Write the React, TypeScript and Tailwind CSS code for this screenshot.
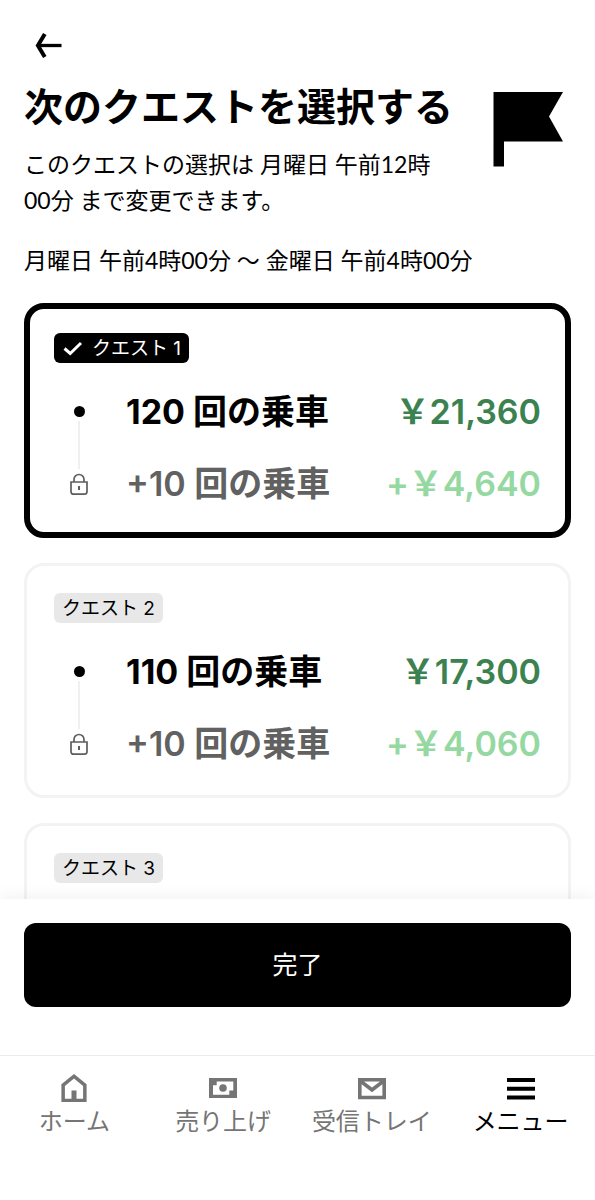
type Level = {
  rides: string;
  reward: string;
};

type Quest = {
  name: string;
  levels?: [Level, Level];
};

const quests: Quest[] = [
  {
    name: "クエスト 1",
    levels: [
      { rides: "120 回の乗車", reward: "￥21,360" },
      { rides: "+10 回の乗車", reward: "+￥4,640" },
    ],
  },
  {
    name: "クエスト 2",
    levels: [
      { rides: "110 回の乗車", reward: "￥17,300" },
      { rides: "+10 回の乗車", reward: "+￥4,060" },
    ],
  },
  { name: "クエスト 3" },
];

function BackIcon() {
  return (
    <svg width="32" height="32" viewBox="0 0 32 32" fill="none" stroke="currentColor">
      <path d="M5.5 15.5H29.5" strokeWidth="3.3" />
      <path d="M12.8 4L5.9 15.5L12.8 27" strokeWidth="4" />
    </svg>
  );
}

function FlagIcon() {
  return (
    <svg width="70" height="75" viewBox="0 0 70 75" fill="currentColor" className="shrink-0">
      <path d="M0.5 0H70L56 24.5L70 49.5H11V74.5H0.5Z" />
    </svg>
  );
}

function CheckIcon() {
  return (
    <svg width="22" height="22" viewBox="0 0 22 22" fill="none" stroke="currentColor">
      <path d="M2.5 10.5L8.2 15.5L19 5" strokeWidth="3" />
    </svg>
  );
}

function LockIcon() {
  return (
    <svg width="20" height="23" viewBox="0 0 20 23" fill="none" stroke="#5e5e5e" strokeWidth="1.7">
      <path d="M2 9H18V18.5Q18 21.2 15.3 21.2H4.7Q2 21.2 2 18.5Z" />
      <path d="M5 9V6.5A5 5 0 0 1 15 6.5V9" />
      <path d="M10 13V17" strokeWidth="2" />
    </svg>
  );
}

function HomeIcon() {
  return (
    <svg width="30" height="30" viewBox="0 0 30 30" fill="currentColor">
      <path
        fillRule="evenodd"
        d="M15 1L27.6 11.3V29H2.4V11.3ZM15 5.6L5.9 13V25.7H24.1V13Z"
      />
      <path d="M12.5 17.5H17.5V26H12.5Z" />
    </svg>
  );
}

function MoneyIcon() {
  return (
    <svg width="30" height="30" viewBox="0 0 30 30" fill="currentColor">
      <path
        fillRule="evenodd"
        d="M1 5H29V25H1ZM8.7 8.5V12.3H5V21.7H21.3V17.5H25.3V8.5Z"
      />
      <circle cx="15" cy="15" r="3.8" />
    </svg>
  );
}

function MailIcon() {
  return (
    <svg width="30" height="30" viewBox="0 0 30 30" fill="currentColor">
      <path
        fillRule="evenodd"
        d="M1 5H29V26.3H1ZM7 8.6L15 14.6L23 8.6ZM4.6 11.3V22.8H25.4V11.3L15 19.2Z"
      />
    </svg>
  );
}

function MenuIcon() {
  return (
    <svg width="30" height="30" viewBox="0 0 30 30" fill="currentColor">
      <path d="M1 5H29V9H1ZM1 13.7H29V17.7H1ZM1 22.5H29V26.5H1Z" />
    </svg>
  );
}

function QuestLevels({ levels }: { levels: [Level, Level] }) {
  const [base, extra] = levels;

  return (
    <div className="mt-6 flex gap-[22px]">
      <div className="flex w-[50px] flex-col items-center gap-1 pt-[19px] pb-3">
        <span className="size-[11px] rounded-full bg-black" />
        <span className="w-[2px] flex-1 bg-[#f0f0f0]" />
        <LockIcon />
      </div>
      <div className="flex flex-1 flex-col gap-6 pt-px text-[34px] leading-[48px]">
        <div className="flex justify-between">
          <span className="font-bold">{base.rides}</span>
          <span className="font-semibold text-[#3b8250]">{base.reward}</span>
        </div>
        <div className="flex justify-between">
          <span className="font-semibold text-[#616161]">{extra.rides}</span>
          <span className="font-semibold text-[#95d8a2]">{extra.reward}</span>
        </div>
      </div>
    </div>
  );
}

function QuestCard({ quest, selected }: { quest: Quest; selected: boolean }) {
  return (
    <li
      className={
        selected
          ? "min-h-[235px] rounded-[20px] border-6 border-black p-6"
          : "min-h-[235px] rounded-[20px] border-3 border-[#f3f3f3] p-[27px]"
      }
    >
      <button
        type="button"
        aria-pressed={selected}
        className={
          selected
            ? "flex h-[30px] w-fit items-center gap-2 rounded-md bg-black px-2 pt-0.5 text-[19px] text-white"
            : "flex h-[30px] w-fit items-center rounded-md bg-[#e8e8e8] px-2 pt-0.5 text-[19px] text-black"
        }
      >
        {selected && <CheckIcon />}
        {quest.name}
      </button>
      {quest.levels && <QuestLevels levels={quest.levels} />}
    </li>
  );
}

export default function App() {
  return (
    <div
      lang="ja"
      className="flex h-screen flex-col bg-white font-['Inter','Noto_Sans_CJK_JP',sans-serif] text-black"
    >
      <main className="min-h-0 flex-1 overflow-hidden px-6 pt-[30px]">
        <button type="button" aria-label="戻る" className="ml-2 block">
          <BackIcon />
        </button>
        <div className="mt-[22px] flex items-start justify-between pr-2">
          <div>
            <h1 className="text-[39px] leading-[46px] font-bold">次のクエストを選択する</h1>
            <p className="mt-4 font-['Lato','Noto_Sans_CJK_JP',sans-serif] text-[23px] leading-9">
              このクエストの選択は 月曜日 午前12時
              <br />
              00分 まで変更できます。
            </p>
          </div>
          <div className="pt-2">
            <FlagIcon />
          </div>
        </div>
        <p className="mt-6 font-['Lato','Noto_Sans_CJK_JP',sans-serif] text-[23px] leading-[37px]">
          月曜日 午前4時00分 〜 金曜日 午前4時00分
        </p>
        <ul className="mt-6 flex flex-col gap-[25px]">
          {quests.map((quest, index) => (
            <QuestCard key={quest.name} quest={quest} selected={index === 0} />
          ))}
        </ul>
      </main>
      <div className="relative bg-white px-6 pt-6 pb-12 shadow-[0_-2px_16px_rgba(0,0,0,0.06)]">
        <button
          type="button"
          className="h-[84px] w-full rounded-xl bg-black pt-0.5 text-[25px] text-white"
        >
          完了
        </button>
      </div>
      <nav className="relative grid h-[145px] grid-cols-4 border-t border-[#ececec] bg-white pt-[17px] text-2xl leading-[38px] text-[#757575]">
        <a href="#home" className="flex flex-col items-center whitespace-nowrap">
          <HomeIcon />
          ホーム
        </a>
        <a href="#earnings" className="flex flex-col items-center whitespace-nowrap">
          <MoneyIcon />
          売り上げ
        </a>
        <a href="#inbox" className="flex flex-col items-center whitespace-nowrap">
          <MailIcon />
          受信トレイ
        </a>
        <a
          href="#menu"
          aria-current="page"
          className="flex flex-col items-center whitespace-nowrap text-black"
        >
          <MenuIcon />
          メニュー
        </a>
      </nav>
    </div>
  );
}
